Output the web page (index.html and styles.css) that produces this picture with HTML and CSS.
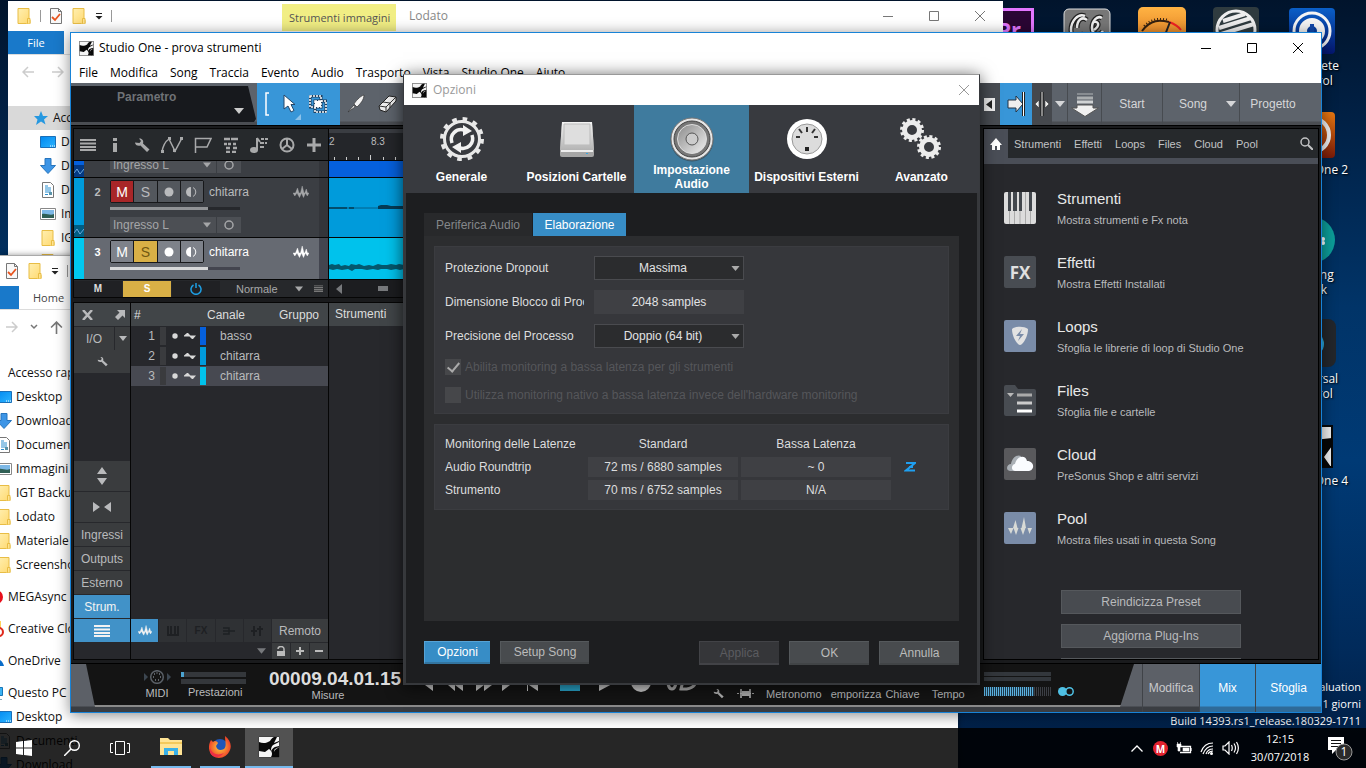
FILE: index.html
```html
<!DOCTYPE html>
<html lang="it">
<head>
<meta charset="utf-8">
<title>Studio One - prova strumenti</title>
<link rel="stylesheet" href="styles.css">
</head>
<body>
<svg class="defs" aria-hidden="true">
  <defs>
    <linearGradient id="gold" x1="0" y1="0" x2="1" y2="1"><stop offset="0" stop-color="#ffefb0"/><stop offset="1" stop-color="#ffd970"/></linearGradient>
    <linearGradient id="screen" x1="0" y1="0" x2="1" y2="1"><stop offset="0" stop-color="#0088f0"/><stop offset="1" stop-color="#2cb4ff"/></linearGradient>
    <linearGradient id="metal" x1="0" y1="0" x2="0" y2="1"><stop offset="0" stop-color="#f4f4f4"/><stop offset="1" stop-color="#b4b4b4"/></linearGradient>
    <linearGradient id="cone" x1="0" y1="0" x2="1" y2="1"><stop offset="0" stop-color="#8a8a8a"/><stop offset="1" stop-color="#f0f0f0"/></linearGradient>
    <linearGradient id="amber" x1="0" y1="0" x2="0" y2="1"><stop offset="0" stop-color="#ffb343"/><stop offset="1" stop-color="#d9701a"/></linearGradient>
    <linearGradient id="blue" x1="0" y1="0" x2="0" y2="1"><stop offset="0" stop-color="#0a5fc8"/><stop offset="1" stop-color="#04166e"/></linearGradient>
    <linearGradient id="rust" x1="0" y1="0" x2="0" y2="1"><stop offset="0" stop-color="#e87810"/><stop offset="1" stop-color="#7a1a08"/></linearGradient>
    <radialGradient id="fox"><stop offset="0" stop-color="#ffd23c"/><stop offset="1" stop-color="#f0452a"/></radialGradient>
  </defs>
  <symbol id="folder" viewBox="0 0 16 16"><path d="M2 .5h11v11l1 1v3h-3l-.5 0H2z" fill="url(#gold)" stroke="#e8bd45"/><path d="M11.5 15.5V10.500h2.500v5" fill="#ffe390" stroke="#e8bd45"/></symbol>
  <symbol id="doccheck" viewBox="0 0 14 16"><path d="M1.500.5h8l3 3v12h-11z" fill="#f8f8f8" stroke="#777"/><path d="M9.500.5v3h3" fill="none" stroke="#777"/><path d="M3 9l3 3 5-6" fill="none" stroke="#e8541e" stroke-width="1.800"/></symbol>
  <symbol id="caretline" viewBox="0 0 8 8"><path d="M1 1.500h6" stroke="currentColor"/><path d="M.5 4h7L4 7.500z" fill="currentColor"/></symbol>
  <symbol id="monitor" viewBox="0 0 16 16"><path d="M.5 2.500h15v11H.5z" fill="url(#screen)" stroke="#1a6fb8"/><path d="M10 12h1M12 12h1M14 12h1" stroke="#fff"/></symbol>
  <symbol id="down" viewBox="0 0 16 16"><path d="M5 .5h6v7h4.500L8 15.500.5 7.500H5z" fill="#3d95e6" stroke="#2775bd"/></symbol>
  <symbol id="doc" viewBox="0 0 16 16"><path d="M2.500.5h8l3 3v12h-11z" fill="#fff" stroke="#777"/><path d="M5 4h3M5 6h6M5 8h6M5 10h6M5 12.500h3" stroke="#2b8fd0"/><path d="M9 10h3v3H9z" fill="#5b93a8"/></symbol>
  <symbol id="image" viewBox="0 0 16 16"><path d="M.5 2.500h15v11H.5z" fill="#fff" stroke="#888"/><path d="M2 4h12v8H2z" fill="#7db8e6"/><path d="M2 8c5-1 8 2 12 0v4H2z" fill="#2f5f55"/></symbol>
  <symbol id="star" viewBox="0 0 16 16"><path d="M8 1l2 5h5l-4 3.500 1.500 5L8 11.500 3 15l1.500-5.500L1 6h5z" fill="#2698e0"/></symbol>
  <symbol id="sone" viewBox="0 0 22 22"><path d="M.5.5h21v21H.5z" fill="#f4f4f4" stroke="#444"/><path d="M1 6c4 2 8 1 11-1 1-2 2-3 4-4l3 0-3 6 5-2v6l-4 2c-2 2-1 5 2 8h-6c2-3 1-6-2-8l-4 3-6-1z" fill="#080808"/><path d="M15 9l6-3v4l-4 1c-2 1-3 2-4 4 0-2 0-4 2-6z" fill="#f4f4f4"/><path d="M17 14l4-3v10h-3c-2-2-3-5-1-7z" fill="#080808"/></symbol>
  <symbol id="caret" viewBox="0 0 10 6"><path d="M0 0h10L5 6z" fill="currentColor"/></symbol>
  <symbol id="wrench" viewBox="0 0 16 16"><path d="M1 5.500C1 8 4 9.500 6.500 8.500L13 15l2.500-2.500-6.500-6C10 3.500 8 1 5 1.500L7 4 5.500 6z" fill="currentColor"/></symbol>
  <symbol id="lines" viewBox="0 0 16 12"><path d="M0 1h16M0 4.500h16M0 8h16M0 11h16" stroke="currentColor" stroke-width="2"/></symbol>
  <symbol id="wave" viewBox="0 0 16 12"><path d="M0 7h2.500l2-5 1.500 5h1.500l1.700-7 1.800 7h.8l1.500-4 1.200 4H16l-1.700 3L12.500 7l-2 4.500L8.500 7 6.500 11.500 4 7 1.800 10z" fill="currentColor" stroke="currentColor" stroke-width=".4"/></symbol>
  <symbol id="halfc" viewBox="0 0 12 12"><path d="M5 1a5 5 0 0 0 0 10z" fill="currentColor"/><path d="M7 1.500a5 5 0 0 1 0 9" fill="none" stroke="currentColor"/></symbol>
  <symbol id="dot" viewBox="0 0 10 10"><circle cx="5" cy="5" r="4.500" fill="currentColor"/></symbol>
  <symbol id="ring" viewBox="0 0 10 10"><circle cx="5" cy="5" r="4" fill="none" stroke="currentColor" stroke-width="1.500"/></symbol>
  <symbol id="zig" viewBox="0 0 10 10"><path d="M0 7l3-4 3 5 4-5" fill="none" stroke="#6ca7dc"/></symbol>
  <symbol id="sine" viewBox="0 0 12 8"><path d="M0 3.500l3-2.500h1l2.500 2.500H12L9 7H8L5.500 4.500H0z" fill="currentColor"/></symbol>
  <symbol id="close" viewBox="0 0 10 10"><path d="M0 0l10 10M10 0L0 10" stroke="currentColor"/></symbol>
  <symbol id="min" viewBox="0 0 10 10"><path d="M0 5.500h10" stroke="currentColor"/></symbol>
  <symbol id="max" viewBox="0 0 10 10"><path d="M.5.5h9v9h-9z" fill="none" stroke="currentColor"/></symbol>
  <symbol id="arrow" viewBox="0 0 12 12"><path d="M0 6h11M6 1l5 5-5 5" fill="none" stroke="currentColor" stroke-width="1.500"/></symbol>
</svg>

<main class="desktop">
  <div class="shortcut s-pr"><svg width="46" height="46" viewBox="0 0 46 46"><path d="M1.500 1.500h43v43h-43z" fill="#2a0634" stroke="#e276ff" stroke-width="3"/></svg><b class="pr">Pr</b></div>
  <div class="shortcut s-cc"><svg width="48" height="46" viewBox="0 0 48 46"><rect x="1" y="1" width="46" height="46" rx="5" fill="#777" stroke="#ddd"/><path d="M22 8c-7-3-14 5-14 14s8 9 13 3M24 12c-5-4-10 0-10 8M39 10c-5-3-10 3-10 10s8 8 11 3M31 14c5-1 6 4 0 8" fill="none" stroke="#222" stroke-width="5"/><path d="M22 8c-7-3-14 5-14 14s8 9 13 3M24 12c-5-4-10 0-10 8M39 10c-5-3-10 3-10 10s8 8 11 3M31 14c5-1 6 4 0 8" fill="none" stroke="#eee" stroke-width="2.500"/></svg></div>
  <div class="shortcut s-meter"><svg width="48" height="46" viewBox="0 0 48 46"><rect width="48" height="46" rx="5" fill="url(#amber)"/><path d="M4 24C13 12 22 13 31 15" fill="none" stroke="#332010" stroke-width="2"/><path d="M6 19C14 11 22 11 31 13" fill="none" stroke="#332010" stroke-width="2" stroke-dasharray="1 2"/><path d="M31 15c6 2 9 4 12 8" fill="none" stroke="#f12222" stroke-width="2"/><path d="M27 28l5-13" stroke="#222" stroke-width="2"/></svg></div>
  <div class="shortcut s-sphere"><svg width="46" height="46" viewBox="0 0 46 46"><rect width="46" height="46" rx="4" fill="#2f3b3f"/><circle cx="23" cy="23" r="19" fill="none" stroke="#eee" stroke-width="3"/><path d="M10 14L32 7M6 21l32-10M5 28l36-11" stroke="#eee" stroke-width="4"/></svg></div>
  <div class="shortcut s-kk"><svg width="46" height="46" viewBox="0 0 46 46"><rect width="46" height="46" rx="4" fill="url(#blue)"/><circle cx="23" cy="23" r="18" fill="none" stroke="#f4f4f4" stroke-width="3"/><circle cx="23" cy="23" r="9" fill="none" stroke="#f4f4f4" stroke-width="8"/><path d="M23 16v10" stroke="#1248ab" stroke-width="4"/></svg><span>Komplete Kontrol</span></div>
  <div class="shortcut s-two"><svg width="46" height="46" viewBox="0 0 46 46"><rect width="46" height="46" rx="4" fill="url(#rust)"/><circle cx="23" cy="23" r="17" fill="none" stroke="#eee" stroke-width="4"/></svg><span>Studio One 2</span></div>
  <div class="shortcut s-track"><svg width="46" height="46" viewBox="0 0 46 46"><circle cx="23" cy="23" r="23" fill="#0c9c98"/><circle cx="34" cy="22" r="2" fill="#fff"/><circle cx="34" cy="26" r="2" fill="#fff"/></svg><span>Backing Track</span></div>
  <div class="shortcut s-uni"><svg width="48" height="48" viewBox="0 0 48 48"><rect width="48" height="48" rx="8" fill="#23262b"/><circle cx="24" cy="25" r="12" fill="#2aa7d8"/></svg><span>Universal Control</span></div>
  <div class="shortcut s-four"><svg width="44" height="44" viewBox="0 0 44 44"><path d="M1 1h41v41H1z" fill="#eee" stroke="#080808" stroke-width="2"/><path d="M24 15l18-2v8L34 32l7 10H26z" fill="#060606"/></svg><span>Studio One 4</span></div>
  <p class="watermark">Windows 10 Pro Evaluation<br>Scade tra 11 giorni<br>Build 14393.rs1_release.180329-1711</p>

  <section class="explorer exp-a" aria-label="Lodato">
    <header class="exp-title">
      <span class="quick"><svg width="16" height="16"><use href="#folder"/></svg><i></i><svg width="14" height="16"><use href="#doccheck"/></svg><svg width="16" height="16"><use href="#folder"/></svg><svg width="8" height="8"><use href="#caretline"/></svg><i></i></span>
      <span class="tooltab">Strumenti immagini</span>
      <span class="exp-name">Lodato</span>
      <span class="exp-controls"><button aria-label="Riduci"><svg width="10" height="10"><use href="#min"/></svg></button><button aria-label="Ingrandisci"><svg width="10" height="10"><use href="#max"/></svg></button><button aria-label="Chiudi"><svg width="10" height="10"><use href="#close"/></svg></button></span>
    </header>
    <div class="ribbon"><button class="filebtn">File</button></div>
    <div class="nav-a"><svg class="flip" width="12" height="12"><use href="#arrow"/></svg><svg width="12" height="12"><use href="#arrow"/></svg></div>
    <nav class="tree-a">
      <a href="#" class="cur"><svg width="16" height="16"><use href="#star"/></svg>Accesso rapido</a>
      <a href="#"><svg width="16" height="16"><use href="#monitor"/></svg>Desktop</a>
      <a href="#"><svg width="16" height="16"><use href="#down"/></svg>Download</a>
      <a href="#"><svg width="16" height="16"><use href="#doc"/></svg>Documenti</a>
      <a href="#"><svg width="16" height="16"><use href="#image"/></svg>Immagini</a>
      <a href="#"><svg width="16" height="16"><use href="#folder"/></svg>IGT Backup</a>
      <a href="#"><svg width="16" height="16"><use href="#folder"/></svg>Lodato</a>
    </nav>
  </section>

  <section class="explorer exp-b" aria-label="Esplora file">
    <header class="quick"><svg width="14" height="16"><use href="#doccheck"/></svg><svg width="16" height="16"><use href="#folder"/></svg><svg width="8" height="8"><use href="#caretline"/></svg><i></i></header>
    <div class="ribbon"><span class="filecut"></span><button class="homebtn">Home</button></div>
    <div class="nav-b"><svg class="dim" width="12" height="12"><use href="#arrow"/></svg><svg width="8" height="8" viewBox="0 0 8 8"><path d="M1 2l3 3 3-3" fill="none" stroke="#777" stroke-width="1.500"/></svg><svg class="up" width="13" height="13"><use href="#arrow"/></svg></div>
    <nav class="tree-b">
      <a href="#" class="top">Accesso rapido</a>
      <a href="#"><svg width="16" height="16"><use href="#monitor"/></svg>Desktop</a>
      <a href="#"><svg width="16" height="16"><use href="#down"/></svg>Download</a>
      <a href="#"><svg width="16" height="16"><use href="#doc"/></svg>Documenti</a>
      <a href="#"><svg width="16" height="16"><use href="#image"/></svg>Immagini</a>
      <a href="#"><svg width="16" height="16"><use href="#folder"/></svg>IGT Backup</a>
      <a href="#"><svg width="16" height="16"><use href="#folder"/></svg>Lodato</a>
      <a href="#"><svg width="16" height="16"><use href="#folder"/></svg>Materiale Web</a>
      <a href="#"><svg width="16" height="16"><use href="#folder"/></svg>Screenshot</a>
      <a href="#" class="root"><svg width="16" height="16" viewBox="0 0 16 16"><circle cx="8" cy="8" r="7" fill="#e8101c"/></svg>MEGAsync</a>
      <a href="#" class="root"><svg width="16" height="16" viewBox="0 0 16 16"><path d="M7 0h6v9H7z" fill="#ffd25c"/><circle cx="11" cy="11" r="4" fill="#fff" stroke="#e02a1c" stroke-width="2"/></svg>Creative Cloud Files</a>
      <a href="#" class="root"><svg width="16" height="16" viewBox="0 0 16 16"><path d="M2 13c0-5 3-5 5-5 3-4 8 0 9 5z" fill="#0a6cc8"/></svg>OneDrive</a>
      <a href="#" class="root"><svg width="16" height="16" viewBox="0 0 16 16"><path d="M2 2.500h12.500v8H2z" fill="#3cb2f2" stroke="#1776b8"/><path d="M5 14.500h9" stroke="#8ab"/></svg>Questo PC</a>
      <a href="#"><svg width="16" height="16"><use href="#monitor"/></svg>Desktop</a>
      <a href="#"><svg width="16" height="16"><use href="#doc"/></svg>Documenti</a>
      <a href="#"><svg width="16" height="16"><use href="#down"/></svg>Download</a>
    </nav>
  </section>

  <section class="studio" aria-label="Studio One">
    <header class="st-title"><svg width="15" height="15"><use href="#sone"/></svg><span>Studio One - prova strumenti</span>
      <span class="win-controls"><button aria-label="Riduci"><svg width="10" height="10"><use href="#min"/></svg></button><button aria-label="Ingrandisci"><svg width="10" height="10"><use href="#max"/></svg></button><button aria-label="Chiudi"><svg width="10" height="10"><use href="#close"/></svg></button></span>
    </header>
    <nav class="menubar"><a href="#">File</a><a href="#">Modifica</a><a href="#">Song</a><a href="#">Traccia</a><a href="#">Evento</a><a href="#">Audio</a><a href="#">Trasporto</a><a href="#">Vista</a><a href="#">Studio One</a><a href="#">Aiuto</a></nav>

    <div class="toolbar">
      <div class="param"><span>Parametro</span><svg width="10" height="6"><use href="#caret"/></svg></div>
      <div class="tools-on">
        <svg width="6" height="24" viewBox="0 0 6 24"><path d="M5 1H2v22h3" fill="none" stroke="#fff" stroke-width="1.500"/></svg>
        <button class="arrowtool" aria-label="Freccia"><svg width="22" height="24" viewBox="0 0 22 24"><path d="M5 3v14l4-3 3 6 3-1.500-3-6h4z" fill="#fff" stroke="#24476a"/></svg><svg class="corner" width="6" height="6" viewBox="0 0 6 6"><path d="M6 0v6H0z" fill="#8cc2ea"/></svg></button>
        <button aria-label="Intervallo"><svg width="18" height="18" viewBox="0 0 18 18"><path d="M1 1h11v11H1zM6 6h11v11H6z" fill="none" stroke="#1d3f5f" stroke-width="3"/><path d="M1 1h11v11H1zM6 6h11v11H6z" fill="none" stroke="#fff" stroke-width="1.500" stroke-dasharray="2 1"/><path d="M6 6h6v6H6z" fill="#fff"/></svg></button>
      </div>
      <button class="tool" aria-label="Dividi"><svg width="20" height="20" viewBox="0 0 20 20"><path d="M18 1c-4 1-9 7-10 9l3 3c3-3 7-7 7-12zM8 11L2 18l7-5z" fill="#f4f4f4" stroke="#333" stroke-width=".7"/></svg></button>
      <button class="tool" aria-label="Cancella"><svg width="20" height="20" viewBox="0 0 20 20"><path d="M1 12L11 2l7 1v4L8 18l-6-2z" fill="#eee" stroke="#222"/><path d="M1 12l7 1 10-10M8 13v5M5 8l7 1v5" fill="none" stroke="#333"/></svg></button>
      <div class="tb-right">
        <button class="r-iso" aria-label="Indietro"><svg width="11" height="13" viewBox="0 0 11 13"><path d="M0 0h11v13H0z" fill="#eee"/><path d="M8 2v9L2 6.500z" fill="#222"/></svg></button>
        <button class="r-on" aria-label="Scorrimento"><svg width="18" height="24" viewBox="0 0 18 24"><path d="M1 8h8V4l7 8-7 8v-4H1z" fill="#eee" stroke="#234"/><path d="M16.500 0v24" stroke="#222" stroke-width="3"/><path d="M16.500 0v24" stroke="#fff"/></svg></button>
        <button class="r-snap" aria-label="Cursore"><svg width="14" height="24" viewBox="0 0 14 24"><path d="M7 0v24" stroke="#111" stroke-width="3"/><path d="M7 0v24" stroke="#fff"/><path d="M0 12l4-4v8zM14 12l-4-4v8z" fill="#eee" stroke="#222" stroke-width=".5"/></svg></button>
        <button class="r-car" aria-label="Opzioni snap"><svg width="10" height="6"><use href="#caret"/></svg></button>
        <button class="r-down" aria-label="Importa"><svg width="28" height="25" viewBox="0 0 28 25"><path d="M6 2h16" stroke="#888d92" stroke-width="2"/><path d="M6 6h16" stroke="#aaaeb0" stroke-width="3"/><path d="M6 10h16" stroke="#d0d3d4" stroke-width="3"/><path d="M6 13h16v3h5.500L14 24.500.5 16H6z" fill="#f0f0f0" stroke="#555"/></svg></button>
        <button class="r-start">Start</button><button class="r-song">Song</button><button class="r-car2" aria-label="Elenco song"><svg width="10" height="6"><use href="#caret"/></svg></button><button class="r-prog">Progetto</button><span class="r-end"></span>
      </div>
    </div>

    <div class="work">
      <div class="left">
        <section class="arrange" aria-label="Arrangiamento">
          <div class="arr-tools">
            <svg width="16" height="12"><use href="#lines"/></svg>
            <svg width="16" height="16" viewBox="0 0 16 16"><path d="M6 1h4v3H6zM6 6h4v9H6z" fill="currentColor"/></svg>
            <svg width="16" height="16"><use href="#wrench"/></svg>
            <svg width="22" height="16" viewBox="0 0 22 16"><path d="M1 15C2 8 5 4 8 2l6 12 7-13" fill="none" stroke="currentColor" stroke-width="1.500"/><path d="M0 13h3v3H0zM7 0h3v3H7zM12 12h3v3h-3zM19 0h3v3h-3z" fill="currentColor"/></svg>
            <svg width="18" height="16" viewBox="0 0 18 16"><path d="M1.500 16V1.500H17L13 10H1.500" fill="none" stroke="currentColor" stroke-width="1.500"/></svg>
            <svg width="16" height="16" viewBox="0 0 16 16"><path d="M1 2h6M8 2h7M1 7h3M5 7h3M10 7h3M3 11h4M10 11h4M3 15h4M9 15h4" stroke="currentColor" stroke-width="2.500"/></svg>
            <svg width="18" height="16" viewBox="0 0 18 16"><path d="M7 1v12M7 1l3 4" stroke="currentColor" stroke-width="2"/><ellipse cx="4" cy="13" rx="4" ry="3" fill="currentColor"/><path d="M11 2h3M15 2h3M10 6h4M15 6h2M10 10h4" stroke="currentColor" stroke-width="2"/></svg>
            <svg width="16" height="16" viewBox="0 0 16 16"><circle cx="8" cy="8" r="6.500" fill="none" stroke="currentColor" stroke-width="2"/><path d="M8 1v7l5 4M8 8l-5 4" stroke="currentColor" stroke-width="2" fill="none"/></svg>
            <svg width="16" height="16" viewBox="0 0 16 16"><path d="M8 1v14M1 8h14" stroke="currentColor" stroke-width="3"/></svg>
          </div>
          <div class="ruler"><span class="bar">2</span><span class="beat">8.3</span><svg class="ticks" width="75" height="5" viewBox="0 0 75 5"><path d="M5.500 2v3M17.500 2v3M29.500 2v3M41.500 0v5M54.500 2v3M66.500 2v3" stroke="#ccc"/></svg></div>

          <div class="track first">
            <span class="strip c1"><svg width="10" height="10"><use href="#zig"/></svg></span>
            <div class="t-body"><span class="t-input"><button>Ingresso L<svg width="8" height="6"><use href="#caret"/></svg></button><button aria-label="Monitor"><svg width="10" height="10"><use href="#ring"/></svg></button></span></div>
          </div>
          <div class="clip k1"></div>

          <div class="track">
            <span class="strip c2"><svg width="10" height="10"><use href="#zig"/></svg></span>
            <div class="t-body">
              <div class="t-row"><b class="num">2</b><span class="msr"><button class="mute">M</button><button>S</button><button aria-label="Registra"><svg width="10" height="10"><use href="#dot"/></svg></button><button aria-label="Ascolta"><svg width="12" height="12"><use href="#halfc"/></svg></button></span><span class="t-name">chitarra</span><svg class="t-wave" width="16" height="14"><use href="#wave"/></svg></div>
              <div class="fader"><i></i></div>
              <span class="t-input"><button>Ingresso L<svg width="8" height="6"><use href="#caret"/></svg></button><button aria-label="Monitor"><svg width="10" height="10"><use href="#ring"/></svg></button></span>
            </div>
          </div>
          <div class="clip k2"><svg width="75" height="8" viewBox="0 0 75 8"><path d="M0 4h75" stroke="#02618a"/><path d="M0 4h18M20 4h5" stroke="#053c56" stroke-width="1.500"/><path d="M49 2l3-1 6 0 4 1h13v3H49z" fill="#053c56"/></svg></div>

          <div class="track sel">
            <span class="strip c3"></span>
            <div class="t-body">
              <div class="t-row"><b class="num">3</b><span class="msr"><button>M</button><button class="solo">S</button><button aria-label="Registra"><svg width="10" height="10"><use href="#dot"/></svg></button><button aria-label="Ascolta"><svg width="12" height="12"><use href="#halfc"/></svg></button></span><span class="t-name">chitarra</span><svg class="t-wave" width="16" height="14"><use href="#wave"/></svg></div>
              <div class="fader"><i></i></div>
            </div>
          </div>
          <div class="clip k3"><svg width="75" height="8" viewBox="0 0 75 8"><path d="M0 2l3-1 3 1 4-1 2 2 4-1 4 1 2-2 5 1 3-1 5 2 5-1 4 1 5-2 4 1 5 0 4-1 5 1 3-1 5 1v4l-4 1-4-1-5 1-4-1-6 0-3 1-5-1-6 1-5-1-7 0-3 2-4-2-6 1-5-1-4 1-4-1z" fill="#04586e"/></svg></div>

          <div class="arr-foot">
            <button>M</button><button class="solo">S</button><button class="power" aria-label="Attiva"><svg width="12" height="12" viewBox="0 0 12 12"><path d="M3.500 2a5 5 0 1 0 5 0M6 0v5" fill="none" stroke="currentColor" stroke-width="1.500"/></svg></button>
            <button class="mode">Normale<svg width="8" height="6"><use href="#caret"/></svg></button><svg class="fl" width="9" height="9" viewBox="0 0 16 12"><use href="#lines"/></svg>
          </div>
          <div class="scroll"><svg width="6" height="10" viewBox="0 0 6 10"><path d="M6 0v10L0 5z" fill="currentColor"/></svg><i></i></div>
        </section>

        <section class="mixer" aria-label="Mixer">
          <div class="mx-side">
            <div class="mx-x"><svg width="11" height="10" viewBox="0 0 11 10"><path d="M1 0l9 10M10 0L1 10" stroke="currentColor" stroke-width="2.500"/></svg><svg width="10" height="10" viewBox="0 0 10 10"><path d="M2 0h8v8L7.500 5.500 3 10 0 7l4.500-4.500z" fill="currentColor"/></svg></div>
            <div class="mx-io"><button>I/O</button><button aria-label="Elenco I/O"><svg width="8" height="5"><use href="#caret"/></svg></button></div>
            <button class="mx-w" aria-label="Configura"><svg width="11" height="11"><use href="#wrench"/></svg></button>
            <span class="mx-gap"></span>
            <button class="tall" aria-label="Altezza"><svg width="10" height="18" viewBox="0 0 10 18"><path d="M5 0l5 7H0zM0 11h10l-5 7z" fill="currentColor"/></svg></button>
            <button class="tall" aria-label="Larghezza"><svg width="18" height="10" viewBox="0 0 18 10"><path d="M0 0l7 5-7 5zM18 0l-7 5 7 5z" fill="currentColor"/></svg></button>
            <button>Ingressi</button><button>Outputs</button><button>Esterno</button><button class="on">Strum.</button>
            <button class="on" aria-label="Elenco"><svg width="16" height="12"><use href="#lines"/></svg></button>
          </div>
          <div class="mx-list">
            <table>
              <thead><tr><th class="h-n">#</th><th class="h-c">Canale</th><th class="h-g">Gruppo</th></tr></thead>
              <tbody>
                <tr><td class="d-n">1</td><td colspan="2"><span class="chan"><i class="bar-d"></i><svg width="6" height="6" viewBox="0 0 10 10"><use href="#dot"/></svg><svg width="12" height="8"><use href="#sine"/></svg><i class="sw b1"></i>basso</span></td></tr>
                <tr><td class="d-n">2</td><td colspan="2"><span class="chan"><i class="bar-d"></i><svg width="6" height="6" viewBox="0 0 10 10"><use href="#dot"/></svg><svg width="12" height="8"><use href="#sine"/></svg><i class="sw b2"></i>chitarra</span></td></tr>
                <tr class="hl"><td class="d-n">3</td><td colspan="2"><span class="chan"><i class="bar-d"></i><svg width="6" height="6" viewBox="0 0 10 10"><use href="#dot"/></svg><svg width="12" height="8"><use href="#sine"/></svg><i class="sw b3"></i>chitarra</span></td></tr>
              </tbody>
            </table>
            <div class="mx-filters">
              <button class="on" aria-label="Tracce"><svg width="14" height="11" viewBox="0 0 16 12"><use href="#wave"/></svg></button>
              <button aria-label="Strumenti"><svg width="12" height="10" viewBox="0 0 12 10"><path d="M1 0v8M4 0v8M8 0v8M11 0v8M0 9h12" stroke="currentColor" stroke-width="2"/></svg></button>
              <button class="fx">FX</button>
              <button aria-label="Bus"><svg width="12" height="8" viewBox="0 0 12 8"><path d="M0 1h6v6H0M0 4h12" fill="none" stroke="currentColor" stroke-width="1.500"/></svg></button>
              <button aria-label="VCA"><svg width="12" height="10" viewBox="0 0 12 10"><path d="M3 0v10M9 0v10M0 5h6M6 3h6" stroke="currentColor" stroke-width="2"/></svg></button>
              <button class="rem">Remoto</button>
            </div>
            <div class="mx-foot">
              <svg width="9" height="6"><use href="#caret"/></svg>
              <button aria-label="Blocca"><svg width="8" height="10" viewBox="0 0 8 10"><path d="M0 5h8v5H0z" fill="currentColor"/><path d="M1 3a3 2.500 0 0 1 6 0v2" fill="none" stroke="currentColor" stroke-width="1.500"/></svg></button>
              <button aria-label="Aggiungi"><svg width="8" height="8" viewBox="0 0 8 8"><path d="M4 0v8M0 4h8" stroke="currentColor" stroke-width="2"/></svg></button>
              <button aria-label="Rimuovi"><svg width="8" height="8" viewBox="0 0 8 8"><path d="M0 4h8" stroke="currentColor" stroke-width="2"/></svg></button>
            </div>
          </div>
          <div class="mx-inst"><header>Strumenti</header></div>
        </section>
      </div>

      <aside class="browser">
        <nav class="br-tabs"><a href="#" class="home" aria-label="Home"><svg width="12" height="12" viewBox="0 0 12 12"><path d="M6 0l6 7h-2v5H7V8H5v4H2V7H0z" fill="currentColor"/></svg></a><a href="#">Strumenti</a><a href="#">Effetti</a><a href="#">Loops</a><a href="#">Files</a><a href="#">Cloud</a><a href="#">Pool</a><button aria-label="Cerca"><svg width="13" height="13" viewBox="0 0 13 13"><circle cx="5" cy="5" r="4" fill="none" stroke="currentColor" stroke-width="1.500"/><path d="M8 8l5 5" stroke="currentColor" stroke-width="2"/></svg></button></nav>
        <div class="br-body">
          <ul>
            <li><svg width="32" height="32" viewBox="0 0 32 32"><rect width="32" height="32" rx="2" fill="#dcdcdc"/><path d="M5.500 19v13M10.500 19v13M16 19v13M21.500 0v32M26.500 19v13" stroke="#aaa"/><path d="M4 0h3v19H4zM9 0h4v19H9zM15 0h3v19h-3zM25 0h3v19h-3z" fill="#42474d"/></svg><div><h3>Strumenti</h3><p>Mostra strumenti e Fx nota</p></div></li>
            <li><span class="fxtile">FX</span><div><h3>Effetti</h3><p>Mostra Effetti Installati</p></div></li>
            <li><svg width="32" height="32" viewBox="0 0 32 32"><rect width="32" height="32" rx="2" fill="#7a8ca8"/><path d="M8 9c4-3 12-3 16 0 0 6-3 12-6 15q-2 2-4 0C11 21 8 15 8 9z" fill="#e2e2e2"/><path d="M18 9l-6 7h4l-2 5 6-7h-4z" fill="#7a8ca8"/></svg><div><h3>Loops</h3><p>Sfoglia le librerie di loop di Studio One</p></div></li>
            <li><svg width="32" height="32" viewBox="0 0 32 32"><path d="M0 3q0-2 2-2h9l3 4h16q2 0 2 2v23q0 2-2 2H2q-2 0-2-2z" fill="#484c52"/><path d="M3 9h7l-3.500 4z" fill="#b8b8b8"/><path d="M13 11h15" stroke="#aaa" stroke-width="3"/><path d="M13 19h15" stroke="#ccc" stroke-width="3"/><path d="M13 27h15" stroke="#fff" stroke-width="3"/></svg><div><h3>Files</h3><p>Sfoglia file e cartelle</p></div></li>
            <li><svg width="32" height="32" viewBox="0 0 32 32"><rect width="32" height="32" rx="2" fill="#59595c"/><path d="M6 23c-5-1-3-7 1-7 1-7 7-10 10-8l-5 15z" fill="#aab0b6"/><path d="M11 23c-5-1-3-7 0-7 2-9 11-9 12-3 8 0 8 10 1 10z" fill="#fafcff"/></svg><div><h3>Cloud</h3><p>PreSonus Shop e altri servizi</p></div></li>
            <li><svg width="32" height="32" viewBox="0 0 32 32"><rect width="32" height="32" rx="2" fill="#7a8ca8"/><path d="M4 16h5l2.500-8 2 8h4l2.500-11 2 11h6l-2.500 6-2-6h-2l-2.500 7-2.500-7h-2L12 23l-2.500-7-2.500 6z" fill="#d8dad6"/></svg><div><h3>Pool</h3><p>Mostra files usati in questa Song</p></div></li>
          </ul>
          <div class="br-actions"><button>Reindicizza Preset</button><button>Aggiorna Plug-Ins</button><button aria-label="Aggiorna"></button></div>
        </div>
      </aside>
    </div>

    <footer class="transport">
      <div class="tr-panel">
        <div class="midi"><svg width="28" height="14" viewBox="0 0 28 14"><circle cx="14" cy="7" r="6.300" fill="none" stroke="#5a6067" stroke-width="1.500"/><path d="M10 7h1M11 4h1M13.500 3h1M16 4h1M17 7h1M12 10h1M15 10h1" stroke="#777e86" stroke-width="1.500"/><path d="M1 3l4 4-4 4zM24 3l4 4-4 4z" fill="#3c4650"/></svg><span>MIDI</span></div>
        <div class="perf"><i></i><i></i><span>Prestazioni</span></div>
        <div class="time"><b>00009.04.01.15</b><span>Misure</span></div>
        <div class="keys">
          <svg width="276" height="16" viewBox="0 0 276 16" fill="#d0d0d0"><path d="M10 2v12L2 8zM32 2v12L25 8zM40 2v12L32 8zM53 2v12l8-6zM61 2v12l8-6zM79 2v12l8-6zM104 2h1v12h-1zM115 2v12L106 8z"/><path d="M137 1h20v13h-20z" fill="#2aa9cf"/><path d="M176 0v14l15-8z"/><circle cx="218" cy="5" r="10"/><path d="M254 0c-1 8-2 12-5 12s-4-3-5-12M261 0l-3 12c12 1 15-4 16-12" fill="none" stroke="#b0b0b0" stroke-width="3"/></svg>
        </div>
        <div class="opts"><svg width="11" height="11"><use href="#wrench"/></svg><svg width="17" height="9" viewBox="0 0 17 9"><path d="M0 4.500h17" stroke="#999" stroke-dasharray="2 1"/><path d="M4 0v9M13 0v9" stroke="#bbb" stroke-width="1.500"/><path d="M5 2h8v5H5z" fill="#aaa"/></svg></div>
        <div class="labels"><span>Metronomo</span><span>emporizza</span><span>Chiave</span><span>Tempo</span></div>
        <div class="out"><i></i><i></i><span class="vol"><b></b></span><svg width="16" height="9" viewBox="0 0 16 9"><circle cx="4.500" cy="4.500" r="4.500" fill="#4fc0e4"/><circle cx="11.500" cy="4.500" r="3.700" fill="#141414" stroke="#4fc0e4" stroke-width="1.500"/></svg></div>
      </div>
      <div class="tr-views"><button>Modifica</button><button class="on">Mix</button><button class="on wide">Sfoglia</button></div>
    </footer>
  </section>

  <section class="dialog" role="dialog" aria-label="Opzioni">
    <header class="dl-title"><svg width="15" height="15"><use href="#sone"/></svg><span>Opzioni</span><button aria-label="Chiudi"><svg width="10" height="10"><use href="#close"/></svg></button></header>
    <div class="dl-cats">
      <button><svg width="46" height="46" viewBox="0 0 46 46"><circle cx="23" cy="23" r="19.500" fill="none" stroke="#e8e8e8" stroke-width="5" stroke-dasharray="4.500 5.710"/><circle cx="23" cy="23" r="17.500" fill="none" stroke="#e8e8e8" stroke-width="3"/><path d="M13 27c-3-9 5-15 12-13M33 19c3 9-5 15-12 13" fill="none" stroke="#f2f2f2" stroke-width="3.500"/><path d="M24 9l9 6-9 5zM22 37l-9-6 9-5z" fill="#f2f2f2"/></svg>Generale</button>
      <button><svg width="46" height="46" viewBox="0 0 46 46"><path d="M8 6h30l2 29v4q0 2-2 2H8q-2 0-2-2v-4z" fill="#a6a6a6"/><path d="M8 6h30l2 28H6z" fill="url(#metal)"/><path d="M10 8h26v21H10z" fill="#dedede" stroke="#bbb"/><path d="M7 34h32v2H7z" fill="#eee"/><path d="M32 37h2v1h-2z" fill="#37a6e0"/></svg>Posizioni Cartelle</button>
      <button class="on"><svg width="46" height="46" viewBox="0 0 46 46"><circle cx="23" cy="24" r="21.500" fill="#333" opacity=".5"/><circle cx="23" cy="23" r="21" fill="#e6e6e6" stroke="#777"/><circle cx="23" cy="23" r="18" fill="#777" stroke="#444"/><circle cx="23" cy="23" r="14.500" fill="url(#cone)" stroke="#ddd"/><circle cx="23" cy="23" r="6" fill="#ccc" stroke="#555"/></svg><span>Impostazione<br>Audio</span></button>
      <button><svg width="46" height="46" viewBox="0 0 46 46"><circle cx="23" cy="23" r="20" fill="#fff"/><circle cx="23" cy="23" r="15" fill="#dcdcdc" stroke="#999"/><path d="M23 11v5M15 13l3 4M31 13l-3 4M12 21h4M30 21h4" stroke="#333" stroke-width="2"/><path d="M21 31h4v4h-4z" fill="#222"/></svg>Dispositivi Esterni</button>
      <button><svg width="46" height="46" viewBox="0 0 46 46"><g fill="none" stroke="#ececec"><circle cx="13" cy="14" r="7.500" stroke-width="5"/><circle cx="13" cy="14" r="10.500" stroke-width="3" stroke-dasharray="3 2.500"/><circle cx="30" cy="31" r="7.500" stroke-width="5"/><circle cx="30" cy="31" r="10.500" stroke-width="3" stroke-dasharray="3 2.500"/></g></svg>Avanzato</button>
    </div>
    <div class="dl-body">
      <div class="dl-tabs"><button>Periferica Audio</button><button class="on">Elaborazione</button></div>
      <div class="dl-panel">
        <div class="group">
          <div class="field"><label for="drop">Protezione Dropout</label><span class="sel-wrap"><select id="drop"><option>Massima</option></select><svg width="9" height="5" viewBox="0 0 10 6"><use href="#caret"/></svg></span></div>
          <div class="field"><span class="lab">Dimensione Blocco di Processo</span><output>2048 samples</output></div>
          <div class="field"><label for="prec">Precisione del Processo</label><span class="sel-wrap"><select id="prec"><option>Doppio (64 bit)</option></select><svg width="9" height="5" viewBox="0 0 10 6"><use href="#caret"/></svg></span></div>
          <div class="check"><input type="checkbox" id="c1" checked disabled><label for="c1">Abilita monitoring a bassa latenza per gli strumenti</label></div>
          <div class="check"><input type="checkbox" id="c2" disabled><label for="c2">Utilizza monitoring nativo a bassa latenza invece dell'hardware monitoring</label></div>
        </div>
        <div class="group lat">
          <table>
            <tr><th scope="row">Monitoring delle Latenze</th><th>Standard</th><th>Bassa Latenza</th><td></td></tr>
            <tr><th scope="row">Audio Roundtrip</th><td class="val">72 ms / 6880 samples</td><td class="val">~ 0</td><td class="zed"><svg width="12" height="10" viewBox="0 0 12 10"><path d="M2 1h9L2 8.500h9M5 5h4" fill="none" stroke="#1f9ff0" stroke-width="2"/></svg></td></tr>
            <tr><th scope="row">Strumento</th><td class="val">70 ms / 6752 samples</td><td class="val">N/A</td><td></td></tr>
          </table>
        </div>
      </div>
      <div class="dl-buttons"><button class="btn on">Opzioni</button><button class="btn setup">Setup Song</button><span class="fill"></span><button class="btn act" disabled>Applica</button><button class="btn act">OK</button><button class="btn act">Annulla</button></div>
    </div>
  </section>

  <footer class="taskbar">
    <button aria-label="Start"><svg width="16" height="16" viewBox="0 0 16 16"><path d="M0 2l7-1v6.500H0zM8 1l8-1v7.500H8zM0 8.500h7V15l-7-1zM8 8.500h8V16l-8-1z" fill="#fff"/></svg></button>
    <button aria-label="Cerca"><svg width="16" height="16" viewBox="0 0 16 16"><circle cx="10.500" cy="5.500" r="4.800" fill="none" stroke="#fff" stroke-width="1.400"/><path d="M7 9L0 16" stroke="#fff" stroke-width="1.500"/></svg></button>
    <button aria-label="Visualizzazione attività"><svg width="20" height="14" viewBox="0 0 20 14"><path d="M5.500.5h9v13h-9zM3 2.500H.5v9H3M17 2.500h2.500v9H17" fill="none" stroke="#fff"/></svg></button>
    <button class="app" aria-label="Esplora file"><svg width="22" height="20" viewBox="0 0 22 20"><path d="M0 1h8l2 2h12v15H0z" fill="#ffe394"/><path d="M0 5h22v2H0z" fill="#f3c95c"/><path d="M4 18V11h14v7h-4v-4H8v4z" fill="#39b0e8"/></svg></button>
    <button class="app" aria-label="Firefox"><svg width="22" height="22" viewBox="0 0 22 22"><circle cx="11" cy="11" r="8" fill="#2056b8"/><path d="M16 0c5 4 7 9 5 14-3 8-12 10-17 6C-1 16-1 9 2 4l2 2c2-2 4-1 5 1l-2 3c1 4 4 5 8 3 3-3 1-8 1-13z" fill="url(#fox)"/><path d="M1 12c2 6 8 8 14 5-5 6-12 5-14-1z" fill="#ee2f45"/></svg></button>
    <button class="app now" aria-label="Studio One"><svg width="22" height="22"><use href="#sone"/></svg></button>
    <div class="tray">
      <svg width="12" height="7" viewBox="0 0 12 7"><path d="M.5 6.500L6 1l5.500 5.500" fill="none" stroke="#fff" stroke-width="1.300"/></svg>
      <span class="mega">M</span>
      <svg width="16" height="12" viewBox="0 0 16 12"><path d="M5 4.500h9.500v6H4M15 6v3" fill="none" stroke="#fff" stroke-width="1.300"/><path d="M7 6h6v3H7zM1 2h4v3H4v4H2V5H1zM1.500 0v2M4.500 0v2" fill="#fff" stroke="#fff" stroke-width=".6"/></svg>
      <svg width="14" height="13" viewBox="0 0 14 13"><g fill="none" stroke="#fff" stroke-width="1.200"><path d="M1 10C3 4 7 1 13 1M3 12c2-5 5-8 10-8M6 12c1-3 4-5 7-5M8 12c1-2 3-3 5-3"/></g><circle cx="11.500" cy="11.500" r="1.500" fill="#fff"/></svg>
      <svg width="17" height="14" viewBox="0 0 17 14"><path d="M1 5h2l4-4v12L3 9H1zM9.500 4c1 2 1 4 0 6M12 2.500c2 3 2 6 0 9M14.500 1c2.500 4 2.500 8 0 12" fill="none" stroke="#fff" stroke-width="1.200"/></svg>
      <time>12:15<br>30/07/2018</time>
      <button class="notif" aria-label="Notifiche"><svg width="26" height="26" viewBox="0 0 26 26"><path d="M1 2h16v13H9l-4 4v-4H1z" fill="#fff"/><path d="M4 5.500h10M4 8.500h10M4 11.500h7" stroke="#111"/><circle cx="17" cy="17" r="8" fill="#2b2b2b" stroke="#999"/></svg><span>1</span></button>
    </div>
  </footer>
</main>
</body>
</html>
```
FILE: styles.css
```css
* { box-sizing: border-box; }
html, body { height: 100%; margin: 0; overflow: hidden; }
body { font: 12px/16px "Liberation Sans", Arial, sans-serif; color: #b9babc; }
button { margin: 0; padding: 0; border: 0; background: none; color: inherit; font: inherit; white-space: nowrap; }
a { color: inherit; text-decoration: none; white-space: nowrap; }
svg { display: block; flex: none; }
table { border-collapse: collapse; border-spacing: 0; }
p, h3, ul { margin: 0; padding: 0; list-style: none; }
th { font-weight: normal; }
.defs { position: absolute; width: 0; height: 0; }

/* Desktop */
.desktop { position: relative; height: 100vh; overflow: hidden; background: linear-gradient(180deg, #01142c 0, #012146 16%, #013468 40%, #003a75 60%, #012a5a 85%, #001c40 100%); }
.shortcut, .watermark, .explorer, .st-title, .menubar, .dl-title, .taskbar { font-family: "Open Sans", "Noto Sans", sans-serif; }
.shortcut { position: absolute; right: 16px; width: 76px; display: flex; flex-direction: column; align-items: center; gap: 4px; color: #fff; font-size: 12px; line-height: 15px; text-align: center; text-shadow: 1px 1px 2px #000; }
.s-pr { right: 317px; top: 8px; }
.s-cc { right: 241px; top: 8px; }
.s-meter { right: 166px; top: 7px; }
.s-sphere { right: 92px; top: 7px; }
.s-kk { top: 8px; }
.s-two { top: 112px; }
.s-track { top: 217px; }
.s-uni { top: 319px; }
.s-four { top: 425px; }
.pr { position: absolute; top: 10px; right: 28px; color: #e276ff; font: bold 22px/22px "Open Sans", sans-serif; text-shadow: none; }
.watermark { position: absolute; right: 5px; bottom: 39px; color: #fff; font-size: 11px; line-height: 17px; text-align: right; }

/* Explorer windows */
.explorer { position: absolute; background: #fff; color: #111; font-size: 12px; overflow: hidden; }
.exp-a { left: 8px; top: 1px; right: 363px; height: 300px; }
.exp-title { display: flex; align-items: center; height: 30px; }
.quick { display: flex; align-items: center; gap: 8px; color: #222; }
.quick i { width: 1px; height: 12px; background: #999; }
.exp-a .quick { width: 274px; padding-left: 8px; flex: none; }
.tooltab { align-self: stretch; margin-top: 3px; padding: 6px 7px 0; width: 114px; background: #f1ee84; color: #555; font-size: 11px; text-align: center; white-space: nowrap; }
.exp-name { padding-left: 13px; color: #888; flex: 1; }
.exp-controls { display: flex; color: #777; }
.exp-controls button { width: 46px; display: grid; place-items: center; }
.ribbon { display: flex; height: 24px; border-bottom: 1px solid #dcdcdc; }
.filebtn { width: 56px; background: #1979ca; color: #fff; font-size: 11px; }
.nav-a { display: flex; gap: 18px; padding: 11px 14px; height: 51px; color: #ccc; }
.flip { transform: scaleX(-1); }
.tree-a a { display: flex; align-items: center; gap: 5px; height: 24px; padding-left: 32px; }
.tree-a .cur { padding-left: 25px; gap: 4px; background: #d9d9d9; }
.exp-b { left: 0; top: 255px; right: 408px; bottom: 0; border-top: 1px solid #aaa; box-shadow: 0 0 6px #0006; }
.exp-b .quick { height: 30px; padding-left: 5px; }
.filecut { width: 19px; background: #1979ca; }
.homebtn { padding-left: 14px; color: #444; font-size: 11px; }
.nav-b { display: flex; align-items: center; gap: 12px; height: 34px; padding-left: 6px; color: #777; }
.dim { color: #ccc; }
.up { transform: rotate(-90deg); }
.tree-b { padding-top: 17px; }
.tree-b a { display: flex; align-items: center; gap: 4px; height: 24px; margin-left: -4px; }
.tree-b .top { margin-left: 8px; }
.tree-b .root { margin: 8px 0 0 -12px; }

/* Studio window */
.studio { position: absolute; left: 70px; top: 32px; right: 44px; bottom: 55px; display: flex; flex-direction: column; border: 1px solid #1883d7; background: #131416; box-shadow: 0 2px 14px #0007; }
.st-title { display: flex; align-items: center; gap: 5px; height: 30px; padding-left: 8px; background: #fff; color: #000; flex: none; }
.win-controls { display: flex; margin-left: auto; height: 100%; }
.win-controls button { width: 46px; display: grid; place-items: center; }
.menubar { display: flex; gap: 12px; height: 20px; padding-left: 8px; background: #fff; color: #000; line-height: 20px; flex: none; }

.toolbar { display: flex; height: 42px; background: linear-gradient(#5d636b 38px, #4a4d52 39px); flex: none; color: #d5d6d8; }
.param { display: flex; width: 186px; height: 36px; margin-top: 3px; padding: 3px 13px 0 46px; justify-content: space-between; background: #17191d; clip-path: polygon(0 0, 177px 0, 185px 33px, 183px 36px, 0 36px); color: #6f7276; font-weight: bold; flex: none; }
.param svg { align-self: flex-end; margin-bottom: 8px; color: #ccc; }
.tools-on { display: flex; align-items: center; gap: 9px; width: 83px; padding-left: 7px; background: #3896d8; flex: none; }
.arrowtool { display: grid; align-self: stretch; align-items: center; }
.arrowtool svg { grid-area: 1 / 1; }
.arrowtool .corner { align-self: end; justify-self: end; margin-bottom: 5px; }
.tools-on button + button { margin-left: -1px; }
.tool { width: 32px; display: grid; place-items: center; flex: none; }
.tb-right { display: flex; margin-left: auto; }
.tb-right > * { border-right: 1px solid #474b50; display: grid; place-items: center; font-size: 12px; }
.tb-right .r-iso { width: 21px; background: #484c52; }
.tb-right .r-on { width: 32px; background: #3896d8; border: 0; }
.tb-right .r-snap { width: 20px; background: #45484d; border: 0; }
.tb-right .r-car { width: 16px; }
.tb-right .r-down { width: 34px; }
.tb-right .r-start { width: 61px; }
.tb-right .r-song { width: 60px; border: 0; }
.tb-right .r-car2 { width: 17px; }
.tb-right .r-prog { width: 66px; border: 0; }
.tb-right .r-end { width: 15px; border: 0; }

.work { display: flex; flex: 1; min-height: 0; gap: 4px; padding: 2px 2px 3px; background: #1a1b1d; border-top: 1px solid #000; }
.left { display: flex; flex-direction: column; gap: 4px; flex: 1; min-width: 0; }
.arrange { display: grid; grid-template-columns: 254px 1fr; grid-template-rows: 31px 16px 59px 41px 17px; gap: 1px; height: 170px; background: #060606; border: 1px solid #060606; flex: none; overflow: hidden; }
.arr-tools { display: flex; align-items: center; justify-content: space-around; background: #26292c; color: #a8a9aa; }
.ruler { display: grid; grid-template-columns: 42px 1fr; grid-template-rows: 22px 5px; background: #24262a; border-top: 4px solid #3a3d42; font-size: 10px; line-height: 18px; }
.ticks { grid-column: 1 / 3; align-self: end; }
.track { display: flex; min-height: 0; background: #3b3e43; overflow: hidden; border-right: 9px solid #33353a; }
.track.sel { background: #666a72; border-right-color: #43454f; color: #fff; }
.strip { display: flex; align-items: flex-end; width: 10px; flex: none; }
.strip svg { height: 12px; background: #0006; }
.c1 { background: #0560dd; } .c2 { background: #009bdb; } .c3 { background: #00c8f0; }
.t-body { display: flex; flex-direction: column; gap: 4px; flex: 1; padding: 2px 0 0 1px; }
.first .t-body { justify-content: flex-end; padding: 0 0 4px 1px; }
.t-row { display: flex; align-items: center; height: 23px; }
.num { width: 25px; text-align: center; font-size: 11px; }
.msr { display: flex; gap: 1px; width: 94px; height: 23px; border: 1px solid #17181a; border-radius: 2px; background: #17181a; }
.msr button { flex: 1; display: grid; place-items: center; background: #53575d; font-size: 14px; }
.sel .msr button { background: #7e828a; }
.msr .mute { background: #a82628; color: #fff; }
.sel .msr .solo { background: #d9b046; color: #725812; }
.t-name { margin-left: 5px; flex: 1; }
.t-wave { margin-right: 10px; color: #a5a6a8; }
.sel .t-wave { color: #fff; }
.fader { margin-left: 25px; width: 130px; height: 3px; background: #26282c; }
.fader i { display: block; width: 98px; height: 3px; background: #919396; }
.sel .fader { background: #43454f; }
.sel .fader i { background: #d8d9da; }
.t-input { display: flex; gap: 1px; margin: 3px 0 0 25px; height: 16px; color: #a5a6a8; flex: none; }
.t-input button { display: flex; align-items: center; justify-content: space-between; width: 106px; padding: 0 5px 0 3px; background: #4c4f54; }
.t-input button + button { width: 24px; padding: 0 7px; }
.clip { display: flex; align-items: center; overflow: hidden; }
.k1 { background: #0560dd; } .k2 { background: #009bdb; } .k3 { background: #00c2ec; }
.k3 { align-items: flex-end; padding-bottom: 8px; }
.arr-foot { display: flex; align-items: center; background: #26282b; gap: 1px; font-size: 11px; }
.arr-foot button { height: 16px; width: 48px; display: grid; place-items: center; background: #202124; font-weight: bold; font-size: 10px; color: #ddd; }
.arr-foot .solo { background: #d9b046; color: #fff; }
.arr-foot .power { color: #1d9fe4; }
.arr-foot .mode { display: flex; width: 90px; padding: 0 8px 0 15px; justify-content: space-between; align-items: center; background: none; font-weight: normal; font-size: 11px; color: #a8a9aa; }
.fl { margin-left: 2px; color: #777; }
.scroll { display: flex; align-items: center; gap: 36px; padding-left: 7px; background: #1c1d20; color: #77797c; }
.scroll i { width: 10px; height: 5px; background: #77797c; }

.mixer { display: grid; grid-template-columns: 56px 197px 1fr; gap: 1px; flex: 1; min-height: 0; padding: 1px; background: #060606; font-size: 12px; }
.mx-side, .mx-list, .mx-inst { display: flex; flex-direction: column; background: #27282c; }
.mx-side { gap: 1px; padding-bottom: 17px; }
.mx-side button { height: 23px; display: grid; place-items: center; background: #3a3c3e; }
.mx-side .tall { height: 30px; }
.mx-x { display: flex; align-items: center; justify-content: space-between; height: 23px; padding: 0 5px 0 8px; background: #414548; }
.mx-io { display: flex; gap: 1px; height: 22px; }
.mx-io button { flex: 1; }
.mx-io button + button { flex: 0 0 15px; }
.mx-gap { flex: 1; }
.mx-side .on, .mx-filters .on { background: #4192c8; color: #f2f2f2; }
.mx-list table { width: 100%; table-layout: fixed; }
.mx-list thead tr, .mx-inst header { height: 23px; background: #414548; color: #dcdddd; }
.mx-list th, .mx-list td { padding: 0; }
.mx-list .h-n { width: 28px; padding-left: 3px; text-align: left; }
.mx-list .h-c { text-align: right; }
.mx-list .h-g { width: 83px; padding-right: 9px; text-align: right; }
.mx-list tbody tr { height: 20px; }
.mx-list .hl { background: #474951; }
.mx-list .d-n { padding-right: 4px; text-align: right; }
.chan { display: flex; align-items: center; padding-left: 1px; }
.bar-d { width: 6px; height: 18px; margin-right: 6px; background: #3a3b3e; }
.chan svg { color: #d8d8d8; }
.chan svg + svg { margin: 0 4px 0 6px; }
.sw { width: 6px; height: 18px; margin-right: 14px; }
.b1 { background: #0560dd; } .b2 { background: #009bdb; } .b3 { background: #00c2ec; }
.mx-filters { display: flex; gap: 1px; margin-top: auto; height: 23px; }
.mx-filters button { flex: 1; display: grid; place-items: center; background: #2f3134; color: #1e2023; }
.mx-filters .rem { flex: 0 0 56px; background: #3a3c3e; color: #b9babc; }
.fx { font-size: 10px; font-weight: bold; }
.mx-foot { display: flex; justify-content: flex-end; align-items: center; gap: 1px; height: 17px; padding-top: 1px; color: #bbb; }
.mx-foot > svg { margin-right: 5px; color: #77797c; }
.mx-foot button { display: grid; place-items: center; width: 18px; height: 16px; background: #3a3c3e; }
.mx-inst header { padding: 3px 6px; }

.browser { display: flex; flex-direction: column; flex: 0 0 336px; border: 1px solid #000; background: #27282c; }
.br-tabs { display: flex; align-items: center; gap: 13px; height: 29px; background: #26292c; font-size: 11px; flex: none; color: #c2c3c5; }
.home { display: grid; place-items: center; align-self: stretch; width: 24px; margin-right: -7px; background: #4a4e57; color: #fff; }
.br-tabs button { margin: 0 5px 0 auto; }
.br-body { display: flex; flex-direction: column; align-items: stretch; flex: 1; min-height: 0; padding: 27px 20px 0; border-top: 6px solid #4a4e57; overflow: hidden; }
.br-body li { display: flex; gap: 21px; height: 64px; }
.br-body li > svg, .fxtile { margin-top: 1px; }
.fxtile { display: grid; place-items: center; width: 32px; height: 32px; border-radius: 2px; background: #484c52; color: #e0e0e0; font: bold 17px "Open Sans", sans-serif; }
h3 { font-weight: normal; font-size: 15px; line-height: 16px; color: #e8e8e8; }
.br-body p { margin-top: 5px; font-size: 11px; line-height: 16px; }
.br-actions { display: flex; flex-direction: column; gap: 10px; margin: 15px 57px 0; }
.br-actions button { height: 24px; border: 1px solid #55585c; background: #484b50; flex: none; }

/* Transport */
.transport { display: flex; height: 49px; background: linear-gradient(#5c6067 42px, #3a3d42 43px); border-top: 1px solid #000; flex: none; }
.tr-panel { display: grid; grid-template-columns: 72px 88px 154px 1fr 47px 214px 160px; flex: 1; height: 43px; background: linear-gradient(#141414 41px, #8a8a8a 41px); clip-path: polygon(15px 0, 100% 0, calc(100% - 14px) 100%, 24px 100%); font-size: 11px; line-height: 12px; min-width: 0; }
.midi { display: flex; flex-direction: column; align-items: center; gap: 3px; width: 100px; padding: 6px 0 0 72px; }
.perf { padding: 8px 0 0 38px; width: 104px; }
.perf i { display: block; height: 5px; width: 65px; margin-bottom: 2px; background: #34373b; }
.perf i:first-child { background: linear-gradient(90deg, #4ba3d0 3px, #34373b 3px); }
.perf span { display: block; margin: 2px 0 0 7px; }
.time { display: flex; flex-direction: column; align-items: center; padding: 5px 0 0 36px; width: 172px; }
.time b { font-size: 19px; line-height: 20px; color: #ddd; }
.time span { padding-right: 14px; }
.keys { padding: 13px 0 0 38px; overflow: hidden; }
.opts { display: flex; align-items: center; gap: 13px; padding-top: 16px; color: #b0b0b0; }
.labels { display: flex; gap: 9px; padding: 24px 0 0 6px; }
.labels span:nth-child(3) { margin-left: -5px; }
.labels span:nth-child(4) { margin-left: 3px; }
.out { display: grid; grid-template-columns: 67px 16px; column-gap: 7px; grid-auto-rows: 4px; row-gap: 1px; padding: 8px 0 0 10px; }
.out i { grid-column: 1; background: #33373c; }
.vol { grid-row: 4 / 6; height: 9px; background: repeating-linear-gradient(90deg, #3c3f45 0 1px, #141414 1px 2px); }
.vol b { display: block; width: 50px; height: 9px; background: repeating-linear-gradient(90deg, #5cb2e0 0 1px, #1c384a 1px 2px); }
.out svg { grid-row: 4 / 6; grid-column: 2; }
.tr-views { display: flex; padding-left: 8px; }
.tr-views button { width: 57px; border-left: 1px solid #404348; color: #c8c9cb; }
.tr-views .on { background: linear-gradient(#3896d8 42px, #2e6a98 43px); color: #fff; }
.tr-views .on { width: 56px; }
.tr-views .wide { width: 66px; }

/* Options dialog */
.dialog { position: absolute; left: 403px; top: 74px; right: 386px; bottom: 83px; display: flex; flex-direction: column; border: 1px solid #999; border-color: #999 #37393d #37393d; background: #1d1e20; box-shadow: 0 2px 16px #000a; color: #dcddde; }
.dl-title { display: flex; align-items: center; gap: 6px; height: 30px; padding: 0 10px 0 8px; background: #fff; color: #999; flex: none; }
.dl-title button { margin-left: auto; }
.dl-cats { display: grid; grid-template-columns: repeat(5, 1fr); height: 88px; background: #383a3f; flex: none; }
.dl-cats button { display: flex; flex-direction: column; align-items: center; padding-top: 11px; gap: 7px; font-weight: bold; color: #fff; }
.dl-cats .on { gap: 1px; background: #3f7b9e; line-height: 14px; }
.dl-body { display: flex; flex-direction: column; flex: 1; min-height: 0; padding: 20px 18px 18px; border: solid #36383b; border-width: 0 2px 1px 2px; }
.dl-tabs { display: flex; gap: 1px; flex: none; }
.dl-tabs button { height: 23px; width: 93px; background: #28292b; color: #85878a; }
.dl-tabs button:first-child { width: 108px; }
.dl-tabs .on { background: #378dc6; color: #fff; }
.dl-panel { flex: 1; min-height: 0; padding: 10px; background: #2c2d2f; }
.group { padding: 9px 10px; border: 1px solid #3b3c40; background: #36373b; }
.group + .group { margin-top: 10px; }
.field { display: grid; grid-template-columns: 139px 150px; column-gap: 10px; align-items: center; margin-bottom: 10px; }
.field label, .lab { white-space: nowrap; overflow: hidden; }
.sel-wrap { display: grid; align-items: center; }
select, output { height: 24px; width: 100%; border: 1px solid #4a4b4f; border-radius: 0; background: #2b2c2e; color: #e2e3e4; font: inherit; }
select { grid-area: 1 / 1; appearance: none; padding: 0 12px 0 0; text-align-last: center; }
.sel-wrap svg { grid-area: 1 / 1; justify-self: end; margin-right: 4px; color: #aaa; pointer-events: none; }
output { display: grid; place-items: center; border: 0; background: #3f4044; }
.check { display: flex; align-items: center; gap: 4px; height: 28px; color: #55565a; white-space: nowrap; }
.field + .check { margin-top: -5px; }
.group .check:last-child { margin-bottom: -5px; }
.check input { appearance: none; display: grid; place-items: center; width: 16px; height: 16px; margin: 0; background: #46474a; }
.check input:checked::before { content: ""; width: 5px; height: 10px; margin-bottom: 3px; border: solid #aaa; border-width: 0 2px 2px 0; transform: rotate(40deg); }
.lat { padding: 6px 0; }
.lat table { margin-left: 7px; border-collapse: separate; border-spacing: 3px; }
.lat th, .lat td { padding: 0; height: 20px; text-align: center; width: 150px; white-space: nowrap; }
.lat th[scope] { width: 140px; text-align: left; }
.lat .val { background: #3f4044; }
.lat td:last-child { width: 32px; padding-left: 10px; }
.dl-buttons { display: flex; align-items: flex-start; gap: 10px; margin-top: 20px; height: 24px; flex: none; }
.btn { height: 23px; width: 66px; border: solid #55595c; border-width: 1px 0 0 1px; border-bottom: 2px solid #414446; background: #484b4e; }
.btn.on { background: #378dc6; border-color: #56a3d6 #56a3d6 #3375a0; color: #fff; }
.btn.setup { width: 89px; color: #bbb; }
.fill { flex: 1; }
.btn.act { width: 80px; height: 24px; color: #bbb; }
.btn.act:disabled { background: #353639; border-color: #424347; color: #5b5c60; }

/* Taskbar */
.taskbar { position: absolute; left: 0; right: 0; bottom: 0; height: 40px; display: flex; background: #000000d9; color: #fff; }
.taskbar > button { display: grid; place-items: center; width: 48px; }
.taskbar > .app { width: 40px; margin-left: 7px; border-bottom: 2px solid #76b9ed; }
.taskbar > .app + .app { margin-left: 9px; }
.taskbar > .app + .now { width: 48px; margin-left: 5px; background: #525252; }
.tray { display: flex; align-items: center; gap: 8px; margin-left: auto; padding-right: 10px; }
.tray > svg:first-child { margin-right: 2px; }
.mega { display: grid; place-items: center; width: 15px; height: 15px; border-radius: 8px; background: #e3222e; font-weight: bold; font-size: 10px; }
time { width: 66px; margin-right: 3px; font-size: 11px; line-height: 18px; text-align: center; }
.notif { display: grid; width: 32px; place-items: center; }
.notif svg, .notif span { grid-area: 1 / 1; }
.notif span { padding: 8px 0 0 8px; }
```
